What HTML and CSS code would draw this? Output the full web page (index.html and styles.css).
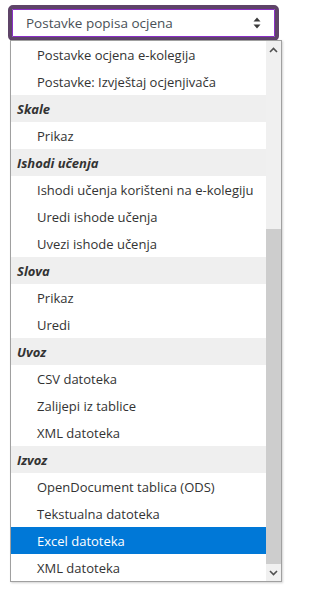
FILE: index.html
```html
<!DOCTYPE html>
<html lang="hr">
<head>
<meta charset="utf-8">
<title>Postavke popisa ocjena</title>
<link rel="stylesheet" href="styles.css">
</head>
<body>
<div class="page">
  <div class="select">
    <span class="select-label">Postavke popisa ocjena</span>
    <svg class="sort-icon" width="8" height="12" viewBox="0 0 8 12"><path d="M4 0.5 L7.5 4.5 L0.5 4.5 Z M4 11.5 L7.5 7.5 L0.5 7.5 Z" fill="#3a3a3a"/></svg>
  </div>
  <div class="dropdown">
    <div class="options">
      <div class="opt">Postavke ocjena e-kolegija</div>
      <div class="opt">Postavke: Izvještaj ocjenjivača</div>
      <div class="grp">Skale</div>
      <div class="opt">Prikaz</div>
      <div class="grp">Ishodi učenja</div>
      <div class="opt">Ishodi učenja korišteni na e-kolegiju</div>
      <div class="opt">Uredi ishode učenja</div>
      <div class="opt">Uvezi ishode učenja</div>
      <div class="grp">Slova</div>
      <div class="opt">Prikaz</div>
      <div class="opt">Uredi</div>
      <div class="grp">Uvoz</div>
      <div class="opt">CSV datoteka</div>
      <div class="opt">Zalijepi iz tablice</div>
      <div class="opt">XML datoteka</div>
      <div class="grp">Izvoz</div>
      <div class="opt">OpenDocument tablica (ODS)</div>
      <div class="opt">Tekstualna datoteka</div>
      <div class="opt selected">Excel datoteka</div>
      <div class="opt">XML datoteka</div>
    </div>
    <div class="scrollbar">
      <div class="sb-btn">
        <svg width="9" height="6" viewBox="0 0 9 6"><path d="M1 5 L4.5 1.5 L8 5" fill="none" stroke="#505050" stroke-width="1.6"/></svg>
      </div>
      <div class="sb-track">
        <div class="sb-thumb"></div>
      </div>
      <div class="sb-btn">
        <svg width="9" height="6" viewBox="0 0 9 6"><path d="M1 1 L4.5 4.5 L8 1" fill="none" stroke="#505050" stroke-width="1.6"/></svg>
      </div>
    </div>
  </div>
</div>
</body>
</html>
```
FILE: styles.css
```css
html, body {
  margin: 0;
  padding: 0;
  background: #ffffff;
}
body {
  font-family: "Open Sans", "Noto Sans", "Liberation Sans", sans-serif;
  font-size: 13px;
  color: #333333;
}
.page {
  position: relative;
  width: 290px;
  height: 591px;
  padding-top: 5px;
  box-sizing: border-box;
}
.select {
  margin-left: 8px;
  width: 271px;
  height: 36px;
  box-sizing: border-box;
  border: 4px solid #5e4468;
  border-radius: 5px;
  box-shadow: inset 0 0 0 1px #8a2fc6;
  display: flex;
  align-items: center;
  justify-content: space-between;
  padding: 0 14px 0 14px;
  color: #495057;
}
.select-label {
  font-size: 13.5px;
}
.sort-icon {
  display: block;
}
.dropdown {
  position: absolute;
  left: 10px;
  top: 40px;
  width: 272px;
  height: 542px;
  box-sizing: border-box;
  border: 1px solid #a0a0a0;
  background: #ffffff;
  box-shadow: 1px 1px 2px rgba(0, 0, 0, 0.18);
  display: flex;
  overflow: hidden;
}
.options {
  flex: 1;
  display: flex;
  flex-direction: column;
  min-width: 0;
}
.opt, .grp {
  height: 27px;
  flex: 0 0 27px;
  display: flex;
  align-items: center;
  white-space: nowrap;
  color: #333333;
}
.opt {
  padding-left: 26px;
}
.grp {
  padding-left: 6px;
  background: #efefef;
  font-weight: bold;
  font-style: italic;
}
.opt.selected {
  background: #0078d7;
  color: #ffffff;
}
.scrollbar {
  width: 15px;
  flex: 0 0 15px;
  display: flex;
  flex-direction: column;
  background: #f0f0f0;
}
.sb-btn {
  height: 17px;
  flex: 0 0 17px;
  display: flex;
  align-items: center;
  justify-content: center;
}
.sb-track {
  flex: 1;
  display: flex;
  flex-direction: column;
  justify-content: flex-end;
}
.sb-thumb {
  height: 335px;
  background: #cdcdcd;
}
```
